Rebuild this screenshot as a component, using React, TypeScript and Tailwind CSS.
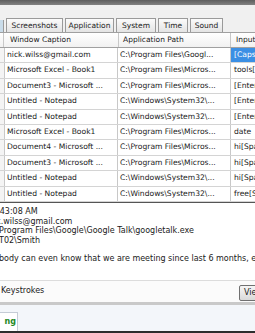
import React from 'react'

const rows = [
  { caption: 'nick.wilss@gmail.com', path: 'C:\\Program Files\\Googl...', input: '[CapsLock]', selected: true },
  { caption: 'Microsoft Excel - Book1', path: 'C:\\Program Files\\Micros...', input: 'tools[Enter]' },
  { caption: 'Document3 - Microsoft ...', path: 'C:\\Program Files\\Micros...', input: '[Enter]' },
  { caption: 'Untitled - Notepad', path: 'C:\\Windows\\System32\\...', input: '[Enter]' },
  { caption: 'Untitled - Notepad', path: 'C:\\Windows\\System32\\...', input: '[Enter]' },
  { caption: 'Microsoft Excel - Book1', path: 'C:\\Program Files\\Micros...', input: 'date' },
  { caption: 'Document4 - Microsoft ...', path: 'C:\\Program Files\\Micros...', input: 'hi[Space]' },
  { caption: 'Document3 - Microsoft ...', path: 'C:\\Program Files\\Micros...', input: 'hi[Space]' },
  { caption: 'Untitled - Notepad', path: 'C:\\Windows\\System32\\...', input: 'hi[Space]' },
  { caption: 'Untitled - Notepad', path: 'C:\\Windows\\System32\\...', input: 'free[Space]' },
]

const tabs = [
  { label: 'Screenshots', w: 'w-[57px]' },
  { label: 'Application', w: 'w-[49px]' },
  { label: 'System', w: 'w-[40px]' },
  { label: 'Time', w: 'w-[30px]' },
  { label: 'Sound', w: 'w-[33px]' },
]

function Tab({ label, w }: { label: string; w: string }) {
  return (
    <div
      className={`${w} h-[14px] shrink-0 border border-b-0 border-[#9a9a9a] bg-gradient-to-b from-[#fbfbfb] to-[#e4e4e4] text-center text-[7.5px] leading-[13px] text-[#222] whitespace-nowrap overflow-hidden`}
    >
      {label}
    </div>
  )
}

export default function App() {
  return (
    <div
      className="w-[255px] h-[333px] overflow-hidden flex flex-col bg-white text-[#1a1a1a]"
      style={{ fontFamily: '"DejaVu Sans", Verdana, sans-serif' }}
    >
      {/* window top edge */}
      <div className="h-[5px] shrink-0 bg-gradient-to-b from-[#5e5e5e] to-[#828282]" />
      <div className="h-[13px] shrink-0 bg-[#f0f0f0]" />

      {/* tabs */}
      <div className="h-[14px] shrink-0 flex items-end gap-[2px] bg-[#f0f0f0]">
        <div className="w-[4px] h-[12px] shrink-0 bg-[#c9dcea] border-r border-[#9a9a9a]" />
        {tabs.map(t => (
          <Tab key={t.label} label={t.label} w={t.w} />
        ))}
      </div>

      {/* grid header */}
      <div className="h-[16px] shrink-0 flex border-t border-b border-[#a0a0a0] bg-gradient-to-b from-[#ffffff] to-[#f1f1f1] text-[7.5px] leading-[14px] whitespace-nowrap">
        <div className="w-[4px] shrink-0 border-r border-[#c8c8c8]" />
        <div className="w-[115px] shrink-0 border-r border-[#c8c8c8] pl-[6px]">Window Caption</div>
        <div className="w-[112px] shrink-0 border-r border-[#c8c8c8] pl-[4px]">Application Path</div>
        <div className="flex-1 pl-[5px] overflow-hidden">Input</div>
      </div>

      {/* grid rows */}
      <div className="shrink-0 flex flex-col">
        {rows.map((r, i) => (
          <div
            key={i}
            className="h-[15.4px] shrink-0 flex border-b border-[#d4d4d4] text-[7.6px] leading-[14px] whitespace-nowrap"
          >
            <div className="w-[5px] shrink-0 border-r border-[#c8c8c8] bg-[#f4f4f4]" />
            <div className="w-[113px] shrink-0 border-r border-[#c8c8c8] pl-[2px] overflow-hidden">{r.caption}</div>
            <div className="w-[113px] shrink-0 border-r border-[#c8c8c8] pl-[2px] overflow-hidden">{r.path}</div>
            <div
              className={`flex-1 pl-[3px] overflow-hidden ${r.selected ? 'bg-[#3b8fe4] text-white' : ''}`}
            >
              {r.input}
            </div>
          </div>
        ))}
      </div>

      {/* details */}
      <div className="shrink-0 border-t border-[#555]" />
      <div className="h-[77px] shrink-0 pt-[4px] text-[8px] leading-[9.7px] whitespace-nowrap overflow-hidden">
        <div className="-ml-[3px]">:43:08 AM</div>
        <div className="-ml-[4px]">k.wilss@gmail.com</div>
        <div className="-ml-[1px]">Program Files\Google\Google Talk\googletalk.exe</div>
        <div className="-ml-[1px]">T02\Smith</div>
        <div className="h-[8px]" />
        <div className="-ml-[1px]">body can even know that we are meeting since last 6 months, even</div>
      </div>

      {/* keystrokes row */}
      <div className="h-[22px] shrink-0 flex items-center justify-between border-t border-[#dcdcdc] bg-[#fbfbfb]">
        <span className="pl-[1px] text-[8px] leading-[10px]">Keystrokes</span>
        <div className="mr-[-20px] mt-[3px] w-[36px] h-[16px] rounded-[2px] border border-[#707070] bg-gradient-to-b from-[#f6f6f6] to-[#d9d9d9] pl-[4px] text-[8px] leading-[14px]">
          View
        </div>
      </div>
      <div className="h-[3px] shrink-0 bg-[#c9c9c9]" />

      {/* bottom tabs */}
      <div className="flex-1 flex items-end bg-[#f3f6fa]">
        <div className="w-[18px] h-[19px] overflow-hidden border-t border-r border-[#c5ccd6] bg-white flex items-center justify-end pr-[1px]">
          <span className="text-[8px] font-bold text-[#23891f] leading-[10px]">ng</span>
        </div>
      </div>
      <div className="h-[2px] shrink-0 bg-[#2e2e2e]" />
    </div>
  )
}
